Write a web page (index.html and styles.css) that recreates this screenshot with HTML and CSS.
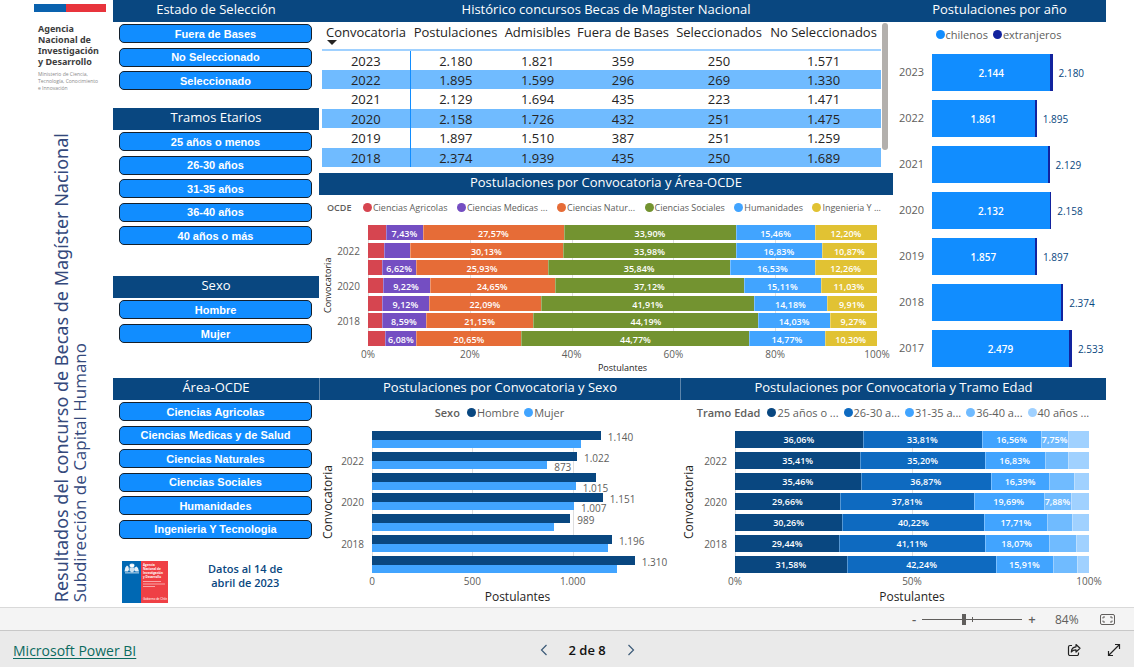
FILE: index.html
```html
<!DOCTYPE html>
<html lang="es">
<head>
<meta charset="utf-8">
<meta name="viewport" content="width=device-width, initial-scale=1">
<title>Resultados del concurso de Becas de Magíster Nacional</title>
<link rel="stylesheet" href="styles.css">
</head>
<body>
<main class="report">
  <aside class="rail">
    <div class="agency">
      <div class="flag"><span class="flag-blue"></span><span class="flag-red"></span></div>
      <p class="agency-name">Agencia<br>Nacional de<br>Investigación<br>y Desarrollo</p>
      <p class="agency-sub">Ministerio de Ciencia,<br>Tecnología, Conocimiento<br>e Innovación</p>
    </div>
    <div class="title">
      <h1>Resultados del concurso de Becas de Magíster Nacional</h1>
      <p>Subdirección de Capital Humano</p>
    </div>
  </aside>

  <div class="filters">
    <section>
      <h2 class="bar-title light">Estado de Selección</h2>
      <div class="options three">
        <button type="button">Fuera de Bases</button>
        <button type="button">No Seleccionado</button>
        <button type="button">Seleccionado</button>
      </div>
    </section>
    <section>
      <h2 class="bar-title light">Tramos Etarios</h2>
      <div class="options five">
        <button type="button">25 años o menos</button>
        <button type="button">26-30 años</button>
        <button type="button">31-35 años</button>
        <button type="button">36-40 años</button>
        <button type="button">40 años o más</button>
      </div>
    </section>
    <section>
      <h2 class="bar-title light">Sexo</h2>
      <div class="options">
        <button type="button">Hombre</button>
        <button type="button">Mujer</button>
      </div>
    </section>
    <section>
      <h2 class="bar-title light">Área-OCDE</h2>
      <div class="options six">
        <button type="button">Ciencias Agricolas</button>
        <button type="button">Ciencias Medicas y de Salud</button>
        <button type="button">Ciencias Naturales</button>
        <button type="button">Ciencias Sociales</button>
        <button type="button">Humanidades</button>
        <button type="button">Ingenieria Y Tecnologia</button>
      </div>
      <div class="stamp">
        <svg class="emblem" viewBox="0 0 46 42" role="img" aria-label="Gobierno de Chile">
          <rect width="19" height="42" fill="#0068b3"/>
          <rect x="19" width="27" height="42" fill="#ef4045"/>
          <g fill="#fff">
            <path d="M7.500 5l.5-2.500L9 3.500 10 2l1 1.500 1-1 .5 2.500-1.500 1.500h-2z"/>
            <path d="M2.500 10.500l.8-4L5 4.500l1.500 1.200.5 3-1 1.800zM17 10.500l-1-3.500-1.500-1.500-1.800 1-.5 2.200 1.300 1.800z" opacity=".9"/>
            <path d="M7.500 6.500h5v3.500L10 11.500 7.500 10z" opacity=".8"/>
            <path d="M3 11.500h14v.8H3z"/>
          </g>
          <g class="emblem-text" fill="#fff">
            <text x="21" y="5">Agencia</text>
            <text x="21" y="9">Nacional de</text>
            <text x="21" y="13">Investigación</text>
            <text x="21" y="17">y Desarrollo</text>
            <text class="emblem-foot" x="21" y="39">Gobierno de Chile</text>
          </g>
          <path d="M21 20.500h18M21 23h22M21 25.500h12" stroke="#f9a5a7"/>
        </svg>
        <p>Datos al 14 de<br>abril de 2023</p>
      </div>
    </section>
  </div>

  <div class="center">
    <section class="history">
      <h2 class="bar-title">Histórico concursos Becas de Magister Nacional</h2>
      <div class="table-wrap">
        <table>
          <colgroup><col class="c1"><col class="c2"><col class="c3"><col class="c4"><col class="c5"><col class="c6"></colgroup>
          <thead>
            <tr><th>Convocatoria<span class="sort"></span></th><th>Postulaciones</th><th>Admisibles</th><th>Fuera de Bases</th><th>Seleccionados</th><th>No Seleccionados</th></tr>
          </thead>
          <tbody>
            <tr><td>2023</td><td>2.180</td><td>1.821</td><td>359</td><td>250</td><td>1.571</td></tr>
            <tr><td>2022</td><td>1.895</td><td>1.599</td><td>296</td><td>269</td><td>1.330</td></tr>
            <tr><td>2021</td><td>2.129</td><td>1.694</td><td>435</td><td>223</td><td>1.471</td></tr>
            <tr><td>2020</td><td>2.158</td><td>1.726</td><td>432</td><td>251</td><td>1.475</td></tr>
            <tr><td>2019</td><td>1.897</td><td>1.510</td><td>387</td><td>251</td><td>1.259</td></tr>
            <tr><td>2018</td><td>2.374</td><td>1.939</td><td>435</td><td>250</td><td>1.689</td></tr>
          </tbody>
        </table>
        <div class="scroll-thumb"></div>
      </div>
    </section>

    <section>
      <h2 class="bar-title">Postulaciones por Convocatoria y Área-OCDE</h2>
      <div class="legend small">
        <b>OCDE</b>
        <span class="key"><i class="agri"></i>Ciencias Agricolas</span>
        <span class="key"><i class="med"></i>Ciencias Medicas ...</span>
        <span class="key"><i class="nat"></i>Ciencias Natur...</span>
        <span class="key"><i class="soc"></i>Ciencias Sociales</span>
        <span class="key"><i class="hum"></i>Humanidades</span>
        <span class="key"><i class="ing"></i>Ingenieria Y ...</span>
      </div>
      <div class="chart ocde">
        <div class="y-title">Convocatoria</div>
        <div class="years"><span></span><span>2022</span><span></span><span>2020</span><span></span><span>2018</span><span></span></div>
        <div class="plot">
          <div class="row"><span class="agri" style="width:3.44%"></span><span class="med" style="width:7.43%">7,43%</span><span class="nat" style="width:27.57%">27,57%</span><span class="soc" style="width:33.9%">33,90%</span><span class="hum" style="width:15.46%">15,46%</span><span class="ing" style="width:12.2%">12,20%</span></div>
          <div class="row"><span class="agri" style="width:3.05%"></span><span class="med" style="width:5.14%"></span><span class="nat" style="width:30.13%">30,13%</span><span class="soc" style="width:33.98%">33,98%</span><span class="hum" style="width:16.83%">16,83%</span><span class="ing" style="width:10.87%">10,87%</span></div>
          <div class="row"><span class="agri" style="width:2.82%"></span><span class="med" style="width:6.62%">6,62%</span><span class="nat" style="width:25.93%">25,93%</span><span class="soc" style="width:35.84%">35,84%</span><span class="hum" style="width:16.53%">16,53%</span><span class="ing" style="width:12.26%">12,26%</span></div>
          <div class="row"><span class="agri" style="width:2.87%"></span><span class="med" style="width:9.22%">9,22%</span><span class="nat" style="width:24.65%">24,65%</span><span class="soc" style="width:37.12%">37,12%</span><span class="hum" style="width:15.11%">15,11%</span><span class="ing" style="width:11.03%">11,03%</span></div>
          <div class="row"><span class="agri" style="width:2.79%"></span><span class="med" style="width:9.12%">9,12%</span><span class="nat" style="width:22.09%">22,09%</span><span class="soc" style="width:41.91%">41,91%</span><span class="hum" style="width:14.18%">14,18%</span><span class="ing" style="width:9.91%">9,91%</span></div>
          <div class="row"><span class="agri" style="width:2.77%"></span><span class="med" style="width:8.59%">8,59%</span><span class="nat" style="width:21.15%">21,15%</span><span class="soc" style="width:44.19%">44,19%</span><span class="hum" style="width:14.03%">14,03%</span><span class="ing" style="width:9.27%">9,27%</span></div>
          <div class="row"><span class="agri" style="width:3.43%"></span><span class="med" style="width:6.08%">6,08%</span><span class="nat" style="width:20.65%">20,65%</span><span class="soc" style="width:44.77%">44,77%</span><span class="hum" style="width:14.77%">14,77%</span><span class="ing" style="width:10.3%">10,30%</span></div>
        </div>
        <div class="axis"><span>0%</span><span>20%</span><span>40%</span><span>60%</span><span>80%</span><span>100%</span></div>
        <div class="x-title">Postulantes</div>
      </div>
    </section>
  </div>

  <section class="by-year">
    <h2 class="bar-title">Postulaciones por año</h2>
    <div class="legend">
      <span class="key"><i class="chil"></i>chilenos</span>
      <span class="key"><i class="ext"></i>extranjeros</span>
    </div>
    <div class="year-rows">
      <div class="year-row"><span class="year">2023</span><div class="track"><span class="chil" style="width:68.1%">2.144</span><span class="ext" style="width:1.2%"></span><span class="total">2.180</span></div></div>
      <div class="year-row"><span class="year">2022</span><div class="track"><span class="chil" style="width:59.1%">1.861</span><span class="ext" style="width:1.1%"></span><span class="total">1.895</span></div></div>
      <div class="year-row"><span class="year">2021</span><div class="track"><span class="chil" style="width:66.5%"></span><span class="ext" style="width:1.1%"></span><span class="total">2.129</span></div></div>
      <div class="year-row"><span class="year">2020</span><div class="track"><span class="chil" style="width:67.7%">2.132</span><span class="ext" style="width:0.8%"></span><span class="total">2.158</span></div></div>
      <div class="year-row"><span class="year">2019</span><div class="track"><span class="chil" style="width:59%">1.857</span><span class="ext" style="width:1.3%"></span><span class="total">1.897</span></div></div>
      <div class="year-row"><span class="year">2018</span><div class="track"><span class="chil" style="width:74%"></span><span class="ext" style="width:1.4%"></span><span class="total">2.374</span></div></div>
      <div class="year-row"><span class="year">2017</span><div class="track"><span class="chil" style="width:78.7%">2.479</span><span class="ext" style="width:1.7%"></span><span class="total">2.533</span></div></div>
    </div>
  </section>

  <div class="bottom">
    <section class="by-sex">
      <h2 class="bar-title">Postulaciones por Convocatoria y Sexo</h2>
      <div class="legend">
        <b>Sexo</b>
        <span class="key"><i class="s1"></i>Hombre</span>
        <span class="key"><i class="s3"></i>Mujer</span>
      </div>
      <div class="chart sex">
        <div class="y-title">Convocatoria</div>
        <div class="years"><span></span><span>2022</span><span></span><span>2020</span><span></span><span>2018</span><span></span></div>
        <div class="plot">
          <div class="pair"><div><span class="s1" style="width:76%"></span>1.140</div><div><span class="s3" style="width:69.3%"></span></div></div>
          <div class="pair"><div><span class="s1" style="width:68.1%"></span>1.022</div><div><span class="s3" style="width:58.2%"></span>873</div></div>
          <div class="pair"><div><span class="s1" style="width:74.3%"></span></div><div><span class="s3" style="width:67.7%"></span>1.015</div></div>
          <div class="pair"><div><span class="s1" style="width:76.7%"></span>1.151</div><div><span class="s3" style="width:67.1%"></span>1.007</div></div>
          <div class="pair"><div><span class="s1" style="width:65.9%"></span>989</div><div><span class="s3" style="width:60.5%"></span></div></div>
          <div class="pair"><div><span class="s1" style="width:79.7%"></span>1.196</div><div><span class="s3" style="width:78.5%"></span></div></div>
          <div class="pair"><div><span class="s1" style="width:87.3%"></span>1.310</div><div><span class="s3" style="width:81.5%"></span></div></div>
        </div>
        <div class="axis"><span>0</span><span>500</span><span>1.000</span><span></span></div>
        <div class="x-title">Postulantes</div>
      </div>
    </section>

    <section class="by-age">
      <h2 class="bar-title">Postulaciones por Convocatoria y Tramo Edad</h2>
      <div class="legend">
        <b>Tramo Edad</b>
        <span class="key"><i class="s1"></i>25 años o ...</span>
        <span class="key"><i class="s2"></i>26-30 a...</span>
        <span class="key"><i class="s3"></i>31-35 a...</span>
        <span class="key"><i class="s4"></i>36-40 a...</span>
        <span class="key"><i class="s5"></i>40 años ...</span>
      </div>
      <div class="chart age">
        <div class="y-title">Convocatoria</div>
        <div class="years"><span></span><span>2022</span><span></span><span>2020</span><span></span><span>2018</span><span></span></div>
        <div class="plot">
          <div class="row"><span class="s1" style="width:36.06%">36,06%</span><span class="s2" style="width:33.81%">33,81%</span><span class="s3" style="width:16.56%">16,56%</span><span class="s4" style="width:7.75%">7,75%</span><span class="s5" style="width:5.82%"></span></div>
          <div class="row"><span class="s1" style="width:35.41%">35,41%</span><span class="s2" style="width:35.2%">35,20%</span><span class="s3" style="width:16.83%">16,83%</span><span class="s4" style="width:6.76%"></span><span class="s5" style="width:5.8%"></span></div>
          <div class="row"><span class="s1" style="width:35.46%">35,46%</span><span class="s2" style="width:36.87%">36,87%</span><span class="s3" style="width:16.39%">16,39%</span><span class="s4" style="width:7.15%"></span><span class="s5" style="width:4.13%"></span></div>
          <div class="row"><span class="s1" style="width:29.66%">29,66%</span><span class="s2" style="width:37.81%">37,81%</span><span class="s3" style="width:19.69%">19,69%</span><span class="s4" style="width:7.88%">7,88%</span><span class="s5" style="width:4.96%"></span></div>
          <div class="row"><span class="s1" style="width:30.26%">30,26%</span><span class="s2" style="width:40.22%">40,22%</span><span class="s3" style="width:17.71%">17,71%</span><span class="s4" style="width:7%"></span><span class="s5" style="width:4.81%"></span></div>
          <div class="row"><span class="s1" style="width:29.44%">29,44%</span><span class="s2" style="width:41.11%">41,11%</span><span class="s3" style="width:18.07%">18,07%</span><span class="s4" style="width:7.6%"></span><span class="s5" style="width:3.78%"></span></div>
          <div class="row"><span class="s1" style="width:31.58%">31,58%</span><span class="s2" style="width:42.24%">42,24%</span><span class="s3" style="width:15.91%">15,91%</span><span class="s4" style="width:6.95%"></span><span class="s5" style="width:3.32%"></span></div>
        </div>
        <div class="axis"><span>0%</span><span>50%</span><span>100%</span></div>
        <div class="x-title">Postulantes</div>
      </div>
    </section>
  </div>
</main>

<div class="zoom-bar">
  <button type="button" class="step" aria-label="Alejar">-</button>
  <input type="range" min="0" max="100" value="42" aria-label="Zoom">
  <button type="button" class="step" aria-label="Acercar">+</button>
  <span class="zoom-value">84%</span>
  <button type="button" class="icon-btn" aria-label="Ajustar a la página">
    <svg width="15" height="11" viewBox="0 0 15 11" fill="none" stroke="#605e5c"><rect x=".5" y=".5" width="14" height="10" rx="1.500"/><path d="M3 4.500V3h2M10 3h2v1.500M12 6.500V8h-2M5 8H3V6.500"/></svg>
  </button>
</div>

<footer class="footer">
  <a href="#">Microsoft Power BI</a>
  <nav class="pager" aria-label="Páginas">
    <button type="button" class="icon-btn" aria-label="Anterior"><svg width="8" height="12" viewBox="0 0 8 12" fill="none" stroke="#3b5a78" stroke-width="1.200"><path d="M6.500 1L1.500 6l5 5"/></svg></button>
    <span>2 de 8</span>
    <button type="button" class="icon-btn" aria-label="Siguiente"><svg width="8" height="12" viewBox="0 0 8 12" fill="none" stroke="#3b5a78" stroke-width="1.200"><path d="M1.500 1l5 5-5 5"/></svg></button>
  </nav>
  <div class="actions">
    <button type="button" class="icon-btn" aria-label="Compartir"><svg width="14" height="14" viewBox="0 0 14 14" fill="none" stroke="#222" stroke-width="1.200" stroke-linejoin="round"><path d="M5 2.500H3A1.500 1.500 0 0 0 1.500 4v7A1.500 1.500 0 0 0 3 12.500h7A1.500 1.500 0 0 0 11.500 11V9.500"/><path d="M9 1.500l4 3.800-4 3.700V6.800C7 6.700 5.500 7.500 4.300 9 4.500 6 6.200 4 9 3.800z"/></svg></button>
    <button type="button" class="icon-btn" aria-label="Pantalla completa"><svg width="14" height="14" viewBox="0 0 14 14" fill="none" stroke="#222" stroke-width="1.200"><path d="M1.500 12.500l11-11M8 1.500h4.500V6M1.500 8v4.500H6"/></svg></button>
  </div>
</footer>
</body>
</html>
```
FILE: styles.css
```css
* { box-sizing: border-box; }

body {
  margin: 0;
  min-height: 100vh;
  display: flex;
  flex-direction: column;
  background: #fff;
  color: #252423;
  font-family: "Open Sans", "Noto Sans", sans-serif;
  font-size: 13px;
}

h1, h2, p { margin: 0; font-weight: 400; }
button { font: inherit; cursor: pointer; }

/* Report canvas */
.report {
  flex: 1;
  display: grid;
  grid-template-columns: 113px 206px minmax(0, 574fr) minmax(0, 213fr);
  grid-template-rows: 378px 1fr;
  padding-right: 28px;
}
.rail { grid-row: 1 / 3; display: flex; flex-direction: column; justify-content: space-between; padding: 4px 0 5px; }
.filters { grid-row: 1 / 3; display: grid; grid-template-rows: 108px 168px 102px 1fr; }
.center { display: grid; grid-template-rows: 173px 1fr; }
.bottom { grid-column: 3 / 5; display: grid; grid-template-columns: 361fr 426fr; }

.bar-title {
  height: 22px;
  line-height: 18px;
  background: #094780;
  color: #fff;
  font-size: 13px;
  font-weight: 500;
  text-align: center;
  white-space: nowrap;
}
.bar-title.light { font-weight: 400; }
.bottom .bar-title { border-left: 1px solid #5d85ab; }

/* Left rail */
.agency { padding-left: 34px; }
.flag { display: flex; width: 72px; height: 8px; }
.flag-blue { flex: 4; background: #0a62ae; }
.flag-red { flex: 5; background: #e8343c; }
.agency-name { padding: 11px 0 0 4px; font-family: "Noto Sans", sans-serif; font-size: 9px; line-height: 11px; font-weight: 700; color: #3d3d3d; white-space: nowrap; }
.agency-sub { padding: 4px 0 0 4px; font-size: 5px; line-height: 7px; color: #8a8a8a; white-space: nowrap; }
.title { display: flex; align-items: flex-end; padding-left: 51px; color: #34497c; }
.title h1, .title p { writing-mode: vertical-rl; transform: rotate(180deg); white-space: nowrap; }
.title h1 { font-family: "Noto Sans", sans-serif; font-size: 18px; line-height: 20px; }
.title p { font-size: 17px; line-height: 18px; }

/* Filter buttons */
.options { display: flex; flex-direction: column; justify-content: space-between; gap: 5px; padding: 2px 7px 0 6px; }
.options.three { height: 68px; gap: 0; }
.options.five { height: 115px; gap: 0; }
.options.six { height: 139px; gap: 0; }
.options button {
  height: 19px;
  padding: 0;
  border: 1px solid #14202c;
  border-radius: 5px;
  background: #118dff;
  color: #fff;
  font-family: "Liberation Sans", Arial, sans-serif;
  font-size: 11px;
  line-height: 16px;
  font-weight: 700;
}
.stamp { display: flex; gap: 40px; padding: 22px 0 0 9px; color: #094780; }
.stamp p { font-size: 11px; line-height: 14px; font-weight: 600; text-align: center; padding-top: 1px; white-space: nowrap; }
.emblem { width: 46px; height: 42px; flex: none; }
.emblem-text { font-size: 3px; font-weight: 700; }
.emblem-foot { font-weight: 400; font-family: "Liberation Sans", Arial, sans-serif; }

/* History table */
.table-wrap { display: flex; gap: 1px; padding: 0 5px 0 3px; }
table { flex: 1; width: 100%; table-layout: fixed; border-collapse: collapse; font-size: 13px; }
.c1 { width: 88px; }
.c2 { width: 91px; }
.c3 { width: 73px; }
.c4 { width: 98px; }
.c5 { width: 94px; }
.c6 { width: 115px; }
th { height: 28px; padding: 2px 0 0; border-bottom: 2px solid #a0d1ff; font-weight: 400; line-height: 16px; vertical-align: top; white-space: nowrap; }
td { height: 20px; padding: 0; line-height: 16px; text-align: center; }
td:first-child { border-right: 1px solid #118dff; }
tbody tr:nth-child(even) td { height: 19px; background: #70bbff; }
.sort { display: block; width: 0; margin-left: 5px; border: 5px solid transparent; border-top-color: #252423; border-bottom: 0; }
.scroll-thumb { flex: none; width: 6px; height: 127px; margin-top: 1px; border-radius: 3px; background: #b3b0ad; }

/* Legends */
.legend { display: flex; justify-content: center; align-items: center; gap: 5px; height: 26px; padding-bottom: 2px; font-size: 11px; color: #605e5c; white-space: nowrap; }
.legend b { font-weight: 600; padding-right: 2px; }
.legend.small { justify-content: space-between; gap: 4px; padding: 0 12px 2px 8px; font-size: 9px; }
.key { display: flex; align-items: center; gap: 1px; }
.key i { width: 9px; height: 9px; border-radius: 50%; }

.agri { background: #d64550; }
.med { background: #744ec2; }
.nat { background: #e66c37; }
.soc { background: #739330; }
.hum { background: #41a4ff; }
.ing { background: #e1c233; }
.chil { background: #118dff; }
.ext { background: #12239e; }
.s1 { background: #094780; }
.s2 { background: #0e6ac0; }
.s3 { background: #41a4ff; }
.s4 { background: #70bbff; }
.s5 { background: #a0d1ff; }

/* Bar charts */
.chart { display: grid; }
.y-title { writing-mode: vertical-rl; transform: rotate(180deg); text-align: center; white-space: nowrap; }
.years, .plot { display: flex; flex-direction: column; justify-content: space-between; }
.years { padding-right: 8px; text-align: right; color: #605e5c; font-size: 10px; }
.row { display: flex; color: #fff; font-size: 9px; font-weight: 600; text-align: center; white-space: nowrap; }
.row span + span { box-shadow: inset 1px 0 rgba(255, 255, 255, .3); }
.axis { grid-column: 3; display: flex; justify-content: space-between; padding-top: 1px; color: #605e5c; font-size: 10px; line-height: 14px; }
.axis span { width: 0; display: flex; justify-content: center; }
.x-title { grid-column: 3; text-align: center; }

.ocde { grid-template-columns: 18px 31px 1fr; padding: 4px 16px 0 0; }
.ocde .y-title { font-size: 9px; line-height: 18px; }
.ocde .plot { height: 121px; background: repeating-linear-gradient(to right, #dedede 0 1px, transparent 1px 20%); }
.ocde .years span, .ocde .row { height: 15px; line-height: 17px; }
.ocde .x-title { font-size: 9px; line-height: 14px; }

.sex .plot, .age .plot { height: 142px; }
.sex .years span, .age .years span, .age .row { height: 17px; line-height: 18px; }
.sex .y-title, .age .y-title { font-size: 12px; line-height: 18px; }
.sex .x-title, .age .x-title { font-size: 12px; line-height: 17px; }

.sex { grid-template-columns: 20px 33px 1fr; padding: 5px 7px 0 0; }
.sex .plot { background: repeating-linear-gradient(to right, #dedede 0 1px, transparent 1px 33.333%); color: #605e5c; }
.sex .x-title { padding-right: 10px; }
.pair > div { display: flex; gap: 7px; font-size: 10px; line-height: 12px; height: 8px; }
.pair > div:first-child { height: 9px; }
.pair span { height: 100%; flex: none; }

.age { grid-template-columns: 21px 34px 1fr; padding: 5px 17px 0 0; }
.age .plot { background: repeating-linear-gradient(to right, #dedede 0 1px, transparent 1px 50%); }

/* Yearly totals */
.by-year .legend { margin-right: 2px; }
.year-rows { display: grid; gap: 9px; padding-top: 6px; }
.year-row { display: flex; height: 37px; }
.year { width: 39px; padding-left: 6px; color: #605e5c; font-size: 11px; line-height: 36px; }
.track { flex: 1; display: flex; }
.track .chil { color: #fff; font-size: 10px; font-weight: 600; line-height: 39px; text-align: center; }
.total { padding-left: 6px; color: #094780; font-size: 10px; line-height: 39px; }

/* Zoom bar */
.zoom-bar { display: flex; align-items: center; justify-content: flex-end; height: 23px; padding-right: 19px; border-top: 1px solid #d9d9d9; background: #f4f4f4; color: #605e5c; }
.step, .icon-btn { padding: 0; border: 0; background: none; color: inherit; display: flex; align-items: center; justify-content: center; }
.step { width: 14px; height: 20px; font-weight: 600; }
.zoom-bar input {
  appearance: none;
  width: 100px;
  height: 11px;
  margin: 0 3px 0 1px;
  background: linear-gradient(#605e5c, #605e5c) 50px 50% / 1px 5px no-repeat, linear-gradient(#605e5c, #605e5c) 0 50% / 100% 1px no-repeat;
}
.zoom-bar input::-webkit-slider-thumb { appearance: none; width: 4px; height: 11px; background: #605e5c; }
.zoom-value { width: 61px; padding-left: 16px; font-size: 12px; }

/* Footer */
.footer { display: flex; align-items: center; justify-content: space-between; height: 37px; padding: 2px 13px 0; border-top: 1px solid #c8c8c8; background: #eaeaea; }
.footer a { color: #0b6a5f; font-size: 14px; text-underline-offset: 2px; }
.pager { display: flex; align-items: center; gap: 21px; color: #111; font-weight: 600; }
.actions { display: flex; justify-content: flex-end; gap: 26px; width: 83px; }
```
